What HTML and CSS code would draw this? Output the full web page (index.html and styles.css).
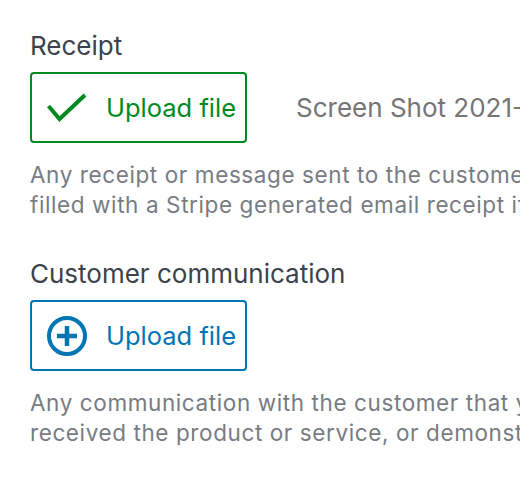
FILE: index.html
```html
<!DOCTYPE html>
<html lang="en">
<head>
<meta charset="utf-8">
<link rel="stylesheet" href="styles.css">
</head>
<body>
<div class="page">
  <section class="field">
    <div class="label">Receipt</div>
    <div class="upload-row">
      <button class="upload upload--done" type="button">
        <svg class="icon" viewBox="0 0 40 40" width="40" height="40" aria-hidden="true">
          <path d="M1.5 18 L12.5 31 L38 7" fill="none" stroke="currentColor" stroke-width="4" stroke-linecap="butt" stroke-linejoin="miter"/>
        </svg>
        <span>Upload file</span>
      </button>
      <span class="filename">Screen Shot 2021-03-12 at 10.42.17.png</span>
    </div>
    <p class="desc">
      <span class="line">Any receipt or message sent to the customer notifying them of the charge. This field will be automatically</span>
      <span class="line">filled with a Stripe generated email receipt if any such receipt was sent.</span>
    </p>
  </section>
  <section class="field">
    <div class="label">Customer communication</div>
    <div class="upload-row">
      <button class="upload upload--new" type="button">
        <svg class="icon" viewBox="0 0 40 40" width="40" height="40" aria-hidden="true">
          <circle cx="20" cy="20" r="18" fill="none" stroke="currentColor" stroke-width="4"/>
          <path d="M20 10 V30 M10 20 H30" fill="none" stroke="currentColor" stroke-width="4.5"/>
        </svg>
        <span>Upload file</span>
      </button>
    </div>
    <p class="desc">
      <span class="line">Any communication with the customer that you feel is relevant to your case (for example emails proving that they</span>
      <span class="line">received the product or service, or demonstrated use of or access to it).</span>
    </p>
  </section>
</div>
</body>
</html>
```
FILE: styles.css
```css
html, body {
  margin: 0;
  padding: 0;
  overflow: hidden;
  background: #fff;
}
body {
  font-family: Inter, "Noto Sans", "Liberation Sans", sans-serif;
  color: #3c434a;
}
.page {
  width: 1400px;
  padding: 28px 0 0 30px;
  display: flex;
  flex-direction: column;
  gap: 36px;
}
.field {
  display: flex;
  flex-direction: column;
}
.label {
  font-size: 26px;
  line-height: 36px;
  margin-bottom: 8px;
  color: #3c434a;
}
.upload-row {
  display: flex;
  align-items: center;
  gap: 49px;
}
.upload {
  box-sizing: border-box;
  width: 217px;
  height: 71px;
  border: 2px solid currentColor;
  border-radius: 4px;
  background: #fff;
  display: flex;
  align-items: center;
  gap: 19px;
  padding: 0 0 0 15px;
  font-family: inherit;
  font-size: 25.5px;
  cursor: pointer;
}
.upload--done { color: #008a20; }
.upload--new { color: #0075b4; }
.icon { flex: none; display: block; }
.filename {
  font-size: 26px;
  color: #757575;
  white-space: nowrap;
}
.desc {
  margin: 17px 0 0;
  font-size: 22.5px;
  line-height: 30px;
  letter-spacing: 0.6px;
  color: #787c82;
}
.line {
  display: block;
  white-space: nowrap;
}
```
